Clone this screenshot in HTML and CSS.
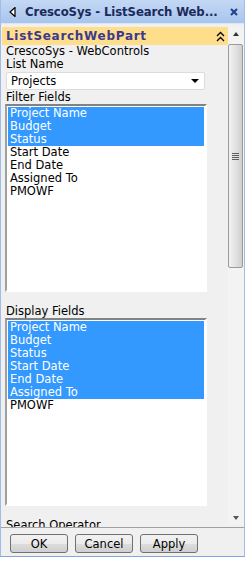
FILE: index.html
```html
<!DOCTYPE html>
<html lang="en">
<head>
  <meta charset="UTF-8">
  <title>ListSearchWebPart</title>
  <link rel="stylesheet" href="styles.css">
</head>
<body>
  <div class="window">
    <div class="titlebar">
      <svg class="back" width="7" height="10" viewBox="0 0 7 10"><polygon points="6,0.5 6,9.5 1,5" fill="#fff" stroke="#000" stroke-width="1.2"/></svg>
      <span class="title">CrescoSys - ListSearch Web...</span>
      <svg class="close" width="8" height="8" viewBox="0 0 8 8"><path d="M1 1 L7 7 M7 1 L1 7" stroke="#1f3f8f" stroke-width="2"/></svg>
    </div>
    <div class="pane">
      <div class="scroller">
        <div class="part-head">
          <span>ListSearchWebPart</span>
          <svg class="collapse" width="9" height="11" viewBox="0 0 9 11"><path d="M1 5 L4.5 1.5 L8 5 M1 10 L4.5 6.5 L8 10" fill="none" stroke="#000" stroke-width="1.3"/></svg>
        </div>
        <div class="editor">
          <div class="line">CrescoSys - WebControls</div>
          <div class="line">List Name</div>
          <div class="select"><span>Projects</span><span class="caret"></span></div>
          <div class="line">Filter Fields</div>
          <ul class="listbox">
            <li class="sel">Project Name</li>
            <li class="sel">Budget</li>
            <li class="sel">Status</li>
            <li>Start Date</li>
            <li>End Date</li>
            <li>Assigned To</li>
            <li>PMOWF</li>
          </ul>
          <div class="line">Display Fields</div>
          <ul class="listbox">
            <li class="sel">Project Name</li>
            <li class="sel">Budget</li>
            <li class="sel">Status</li>
            <li class="sel">Start Date</li>
            <li class="sel">End Date</li>
            <li class="sel">Assigned To</li>
            <li>PMOWF</li>
          </ul>
          <div class="line">Search Operator</div>
        </div>
      </div>
      <div class="vscroll">
        <div class="sb-arrow"><span class="tri-up"></span></div>
        <div class="thumb"><span class="grip"></span></div>
        <div class="track"></div>
        <div class="sb-arrow"><span class="tri-down"></span></div>
      </div>
    </div>
    <div class="footer">
      <button class="btn">OK</button>
      <button class="btn">Cancel</button>
      <button class="btn">Apply</button>
    </div>
  </div>
</body>
</html>
```

FILE: styles.css
```css
body { margin: 0; background: #fff; font-family: "DejaVu Sans", Verdana, sans-serif; font-size: 11.5px; color: #000; }
.window { width: 243px; border-left: 1px solid #9fbce6; border-right: 1px solid #9fbce6; border-bottom: 1px solid #7fa6dc; }

.titlebar {
  height: 23px; display: flex; align-items: center;
  background: linear-gradient(#c3d8f4, #a9c5ec);
  border-bottom: 1px solid #dbe6f5;
}
.back { margin-left: 8px; margin-right: 9px; }
.title { font-weight: bold; font-size: 11.7px; color: #1b2a5c; flex: 1; white-space: nowrap; letter-spacing: -0.1px; }
.close { margin-right: 6px; }

.pane { display: flex; height: 503px; background: #f0f0f0; }
.scroller { width: 226px; padding-left: 1px; overflow: hidden; }
.part-head {
  margin-top: 3px; width: 218px; height: 18px; padding: 0 4px;
  display: flex; align-items: center; justify-content: space-between;
  background: #fedd8b; color: #3d398c; font-weight: bold; font-size: 12px; letter-spacing: 0.7px;
}
.collapse { margin-right: -1px; }

.editor { padding-left: 4px; }
.line { height: 13px; line-height: 13px; white-space: nowrap; }
.select {
  width: 197px; height: 16px; margin: 1px 0 1px 0;
  display: flex; align-items: center; justify-content: space-between;
  background: #fff; border: 1px solid #dcdcdc; border-radius: 2px;
}
.select span:first-child { padding-left: 4px; }
.caret { width: 0; height: 0; margin-right: 5px; border-left: 4px solid transparent; border-right: 4px solid transparent; border-top: 4px solid #000; }

.listbox {
  list-style: none; margin: 0 0 13px -1px; padding: 1px;
  width: 196px; height: 182px;
  background: #fff;
  border-style: solid; border-width: 2px;
  border-color: #828282 #fff #fff #a0a0a0;
}
.listbox li { height: 13px; line-height: 13px; padding-left: 2px; white-space: nowrap; }
.listbox li.sel { background: #3399ff; color: #fff; }

.vscroll { width: 16px; margin-top: 3px; height: 498px; display: flex; flex-direction: column; background: #f3f3f3; }
.sb-arrow { height: 14px; display: flex; align-items: center; justify-content: center; }
.tri-up { width: 0; height: 0; border-left: 3.5px solid transparent; border-right: 3.5px solid transparent; border-bottom: 4px solid #333; }
.tri-down { width: 0; height: 0; border-left: 3.5px solid transparent; border-right: 3.5px solid transparent; border-top: 4px solid #555; }
.thumb {
  margin-top: 3px; width: 13px; height: 222px;
  border: 1px solid #9a9a9a; border-radius: 2px;
  background: linear-gradient(90deg, #f2f2f2, #e2e2e2 50%, #cfcfcf);
  display: flex; align-items: center; justify-content: center;
}
.grip { width: 7px; height: 7px; background: repeating-linear-gradient(#5e5e5e 0 1px, transparent 1px 2px); }
.track { flex: 1; }

.footer {
  height: 29px; border-top: 1px solid #a0a0a0; background: #f0f0f0;
  display: flex; gap: 7px; padding: 6px 0 0 9px; box-sizing: border-box;
}
.btn {
  width: 58px; height: 19px; padding: 0;
  font-family: "DejaVu Sans", Verdana, sans-serif; font-size: 11.5px; color: #000;
  border: 1px solid #707070; border-radius: 3px;
  background: linear-gradient(#f2f2f2, #ebebeb 50%, #dddddd 51%, #cfcfcf);
}
```
